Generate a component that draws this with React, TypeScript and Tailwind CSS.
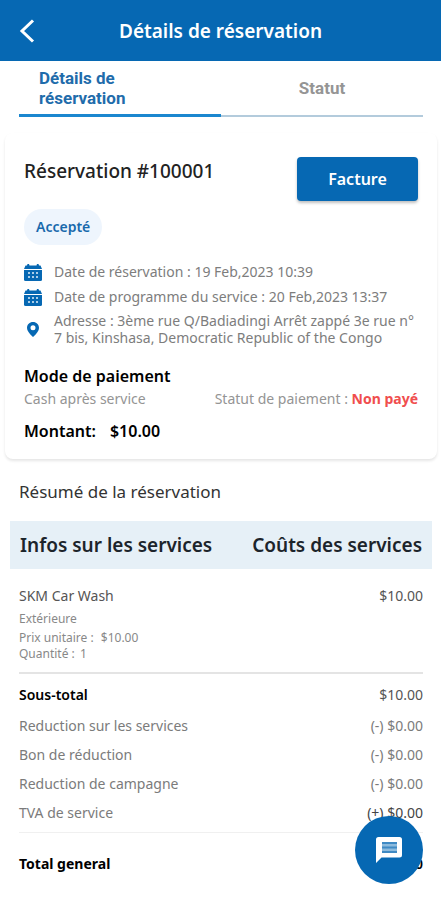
const charges = [
  { label: "Reduction sur les services", value: "(-) $0.00" },
  { label: "Bon de réduction", value: "(-) $0.00" },
  { label: "Reduction de campagne", value: "(-) $0.00" },
];

function CalendarIcon() {
  return (
    <svg viewBox="0 0 18 17" className="h-[17px] w-[18px] shrink-0 fill-[#0668b3]" aria-hidden="true">
      <path d="M1.500 1.500H3L3.500 0H5L5.500 1.500H12.500L13 0H14.500L15 1.500H16.500L18 5H0Z" />
      <path d="M0 6H18V15.500Q18 17 16.500 17H1.500Q0 17 0 15.500Z" />
      <path
        className="fill-[#a9cde8]"
        d="M4 8H6V10H4ZM8 8H10V10H8ZM12 8H14V10H12ZM4 12H6V14H4ZM8 12H10V14H8ZM12 12H14V14H12Z"
      />
    </svg>
  );
}

function PinIcon() {
  return (
    <svg viewBox="0 0 18 18" className="size-[18px] shrink-0 fill-[#0668b3]" aria-hidden="true">
      <path
        fillRule="evenodd"
        d="M9 2C5.600 2 3 4.600 3 7.900C3 10.500 5 13.200 9 17C13 13.200 15 10.500 15 7.900C15 4.600 12.400 2 9 2ZM9 5.300A2.500 2.500 0 1 1 9 10.300A2.500 2.500 0 1 1 9 5.300Z"
      />
    </svg>
  );
}

function MessageIcon() {
  return (
    <svg viewBox="0 0 26 26" className="size-[26px]" aria-hidden="true">
      <path className="fill-white" d="M2.500 0H23.500Q26 0 26 2.500V18Q26 20.500 23.500 20.500H5.500L0 26V2.500Q0 0 2.500 0Z" />
      <path className="fill-[#8dbbdd]" d="M6 5H21V16H6Z" />
      <path className="fill-[#3f8ac4]" d="M6 5H21V7H6ZM6 9.500H21V11.500H6ZM6 14H21V16H6Z" />
    </svg>
  );
}

function Header() {
  return (
    <header className="flex h-[61px] items-center bg-[#0668b3] px-4 text-white">
      <button type="button" aria-label="Retour" className="flex size-6 items-center justify-center">
        <svg viewBox="0 0 24 24" className="size-6 fill-none stroke-white stroke-3" aria-hidden="true">
          <path d="M17 1.500 6 12l11 10.500" />
        </svg>
      </button>
      <h1 className="flex-1 pr-6 text-center text-[19px] leading-7 font-semibold">Détails de réservation</h1>
    </header>
  );
}

function Tabs() {
  return (
    <nav
      role="tablist"
      className="mr-[18px] ml-[19px] flex h-14 font-['Roboto',sans-serif] text-[17px] leading-5 font-bold"
    >
      <button
        type="button"
        role="tab"
        aria-selected="true"
        className="w-1/2 border-b-3 border-[#1b87cf] px-5 text-left text-[#1f6cab]"
      >
        Détails de réservation
      </button>
      <button
        type="button"
        role="tab"
        aria-selected="false"
        className="w-1/2 border-b-2 border-[#b3cbdc] text-center text-[#959595]"
      >
        Statut
      </button>
    </nav>
  );
}

function BookingCard() {
  return (
    <section className="mr-1 ml-[5px] mt-4 rounded-lg bg-white px-[19px] pt-6 pb-4 shadow-[0_2px_3px_rgba(0,0,0,0.1)]">
      <div className="flex items-start justify-between">
        <h2 className="text-[19px] leading-7 font-medium text-[#222]">Réservation #100001</h2>
        <button
          type="button"
          className="h-11 w-[121px] rounded bg-[#0668b3] text-base font-semibold text-white shadow-[0_2px_3px_rgba(0,0,0,0.25)]"
        >
          Facture
        </button>
      </div>
      <span className="mt-2 inline-flex h-9 items-center rounded-full bg-[#eef5fd] px-3 text-sm font-semibold text-[#1769ac]">
        Accepté
      </span>
      <ul className="mt-[17px] flex flex-col gap-[5px] text-sm text-[#7d7d7d]">
        <li className="flex items-center gap-3">
          <CalendarIcon />
          Date de réservation : 19 Feb,2023 10:39
        </li>
        <li className="flex items-center gap-3">
          <CalendarIcon />
          Date de programme du service : 20 Feb,2023 13:37
        </li>
        <li className="flex items-center gap-3 leading-[17px]">
          <PinIcon />
          Adresse : 3ème rue Q/Badiadingi Arrêt zappé 3e rue n° 7 bis, Kinshasa, Democratic Republic of the Congo
        </li>
      </ul>
      <h3 className="mt-[17px] text-base leading-[26px] font-semibold text-black">Mode de paiement</h3>
      <div className="flex items-center justify-between text-sm text-[#949494]">
        <p>Cash après service</p>
        <p>
          Statut de paiement : <strong className="font-bold text-[#f04e4e]">Non payé</strong>
        </p>
      </div>
      <p className="mt-[10px] flex gap-[14px] text-base font-semibold text-black">
        <span>Montant:</span>
        <span>$10.00</span>
      </p>
    </section>
  );
}

function Summary() {
  return (
    <section>
      <h2 className="mx-[19px] mt-[21px] text-[17px] leading-6 text-[#333]">Résumé de la réservation</h2>
      <table className="mr-[9px] ml-[10px] mt-[17px] w-[calc(100%-19px)]">
        <thead className="bg-[#e6f0f7] text-[19px] text-[#1c242b]">
          <tr className="h-12">
            <th className="pl-[10px] text-left font-semibold">Infos sur les services</th>
            <th className="pr-[10px] text-right font-semibold">Coûts des services</th>
          </tr>
        </thead>
        <tbody>
          <tr className="align-top">
            <td className="px-[9px] pt-[17px] pb-[10px] text-xs leading-4 text-[#888]">
              <p className="text-sm leading-5 text-[#555]">SKM Car Wash</p>
              <p className="mt-[5px]">Extérieure</p>
              <p className="mt-[3px]">
                Prix unitaire : <span className="ml-1">$10.00</span>
              </p>
              <p>
                Quantité : <span className="ml-0.5">1</span>
              </p>
            </td>
            <td className="px-[9px] pt-[17px] text-right text-sm text-[#555]">$10.00</td>
          </tr>
        </tbody>
      </table>
      <table className="mr-[18px] ml-[19px] w-[calc(100%-37px)] border-t-2 border-[#e4e4e4] text-sm text-[#7b7b7b]">
        <tbody>
          <tr className="h-[38px] text-[#555]">
            <th className="pt-1 text-left font-semibold text-black">Sous-total</th>
            <td className="pt-1 text-right">$10.00</td>
          </tr>
          {charges.map((charge) => (
            <tr key={charge.label} className="h-[29px]">
              <th className="text-left font-normal">{charge.label}</th>
              <td className="text-right">{charge.value}</td>
            </tr>
          ))}
          <tr className="h-[34px]">
            <th className="pb-1 text-left font-normal">TVA de service</th>
            <td className="pb-1 text-right text-[#444]">(+) $0.00</td>
          </tr>
        </tbody>
        <tfoot>
          <tr className="h-16 border-t border-[#f0f0f0] font-semibold text-black">
            <th className="text-left">Total general</th>
            <td className="text-right">$10.00</td>
          </tr>
        </tfoot>
      </table>
    </section>
  );
}

export default function App() {
  return (
    <main className="min-h-screen bg-white font-['Noto_Sans',sans-serif]">
      <Header />
      <Tabs />
      <BookingCard />
      <Summary />
      <button
        type="button"
        aria-label="Discussion"
        className="fixed right-[18px] bottom-4 flex size-[68px] items-center justify-center rounded-full bg-[#0668b3]"
      >
        <MessageIcon />
      </button>
    </main>
  );
}
